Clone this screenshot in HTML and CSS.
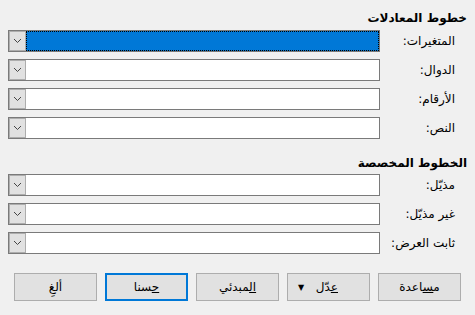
FILE: index.html
```html
<!DOCTYPE html>
<html lang="ar" dir="rtl">

<head>
    <meta charset="UTF-8" />
    <title>الخطوط</title>
    <link rel="stylesheet" href="styles.css">
</head>

<body>
    <div class="dialog">

        <!-- Formula fonts -->
        <div class="group-title">خطوط المعادلات</div>
        <div class="rows">
            <div class="row">
                <label class="label"><u>المتغيرات</u>:</label>
                <div class="combo">
                    <div class="field selected"></div>
                    <div class="drop"><svg width="9" height="6" viewBox="0 0 9 6"><path d="M1 1 L4.5 4.5 L8 1" fill="none" stroke="#444" stroke-width="1"/></svg></div>
                </div>
            </div>
            <div class="row">
                <label class="label"><u>الدوال</u>:</label>
                <div class="combo">
                    <div class="field"></div>
                    <div class="drop"><svg width="9" height="6" viewBox="0 0 9 6"><path d="M1 1 L4.5 4.5 L8 1" fill="none" stroke="#444" stroke-width="1"/></svg></div>
                </div>
            </div>
            <div class="row">
                <label class="label"><u>الأرقام</u>:</label>
                <div class="combo">
                    <div class="field"></div>
                    <div class="drop"><svg width="9" height="6" viewBox="0 0 9 6"><path d="M1 1 L4.5 4.5 L8 1" fill="none" stroke="#444" stroke-width="1"/></svg></div>
                </div>
            </div>
            <div class="row">
                <label class="label"><u>النص</u>:</label>
                <div class="combo">
                    <div class="field"></div>
                    <div class="drop"><svg width="9" height="6" viewBox="0 0 9 6"><path d="M1 1 L4.5 4.5 L8 1" fill="none" stroke="#444" stroke-width="1"/></svg></div>
                </div>
            </div>
        </div>

        <!-- Custom fonts -->
        <div class="group-title second">الخطوط المخصصة</div>
        <div class="rows">
            <div class="row">
                <label class="label"><u>مذيّل</u>:</label>
                <div class="combo">
                    <div class="field"></div>
                    <div class="drop"><svg width="9" height="6" viewBox="0 0 9 6"><path d="M1 1 L4.5 4.5 L8 1" fill="none" stroke="#444" stroke-width="1"/></svg></div>
                </div>
            </div>
            <div class="row">
                <label class="label"><u>غير</u> مذيّل:</label>
                <div class="combo">
                    <div class="field"></div>
                    <div class="drop"><svg width="9" height="6" viewBox="0 0 9 6"><path d="M1 1 L4.5 4.5 L8 1" fill="none" stroke="#444" stroke-width="1"/></svg></div>
                </div>
            </div>
            <div class="row">
                <label class="label"><u>ثابت</u> العرض:</label>
                <div class="combo">
                    <div class="field"></div>
                    <div class="drop"><svg width="9" height="6" viewBox="0 0 9 6"><path d="M1 1 L4.5 4.5 L8 1" fill="none" stroke="#444" stroke-width="1"/></svg></div>
                </div>
            </div>
        </div>

        <!-- Buttons -->
        <div class="buttons">
            <button class="btn">م<u>س</u>اعدة</button>
            <button class="btn menu-btn"><span><u>ع</u>دّل</span><span class="arrow">&#9660;</span></button>
            <button class="btn"><u>ال</u>مبدئي</button>
            <button class="btn default"><u>ح</u>سنا</button>
            <button class="btn">ألغِ</button>
        </div>
    </div>
</body>

</html>
```

FILE: styles.css
```css
body {
    margin: 0;
    background-color: #f0f0f0;
    font-family: 'DejaVu Sans', 'Noto Sans', sans-serif;
    font-size: 12px;
    color: #000;
}

.dialog {
    width: 475px;
    height: 315px;
    box-sizing: border-box;
    padding: 9px 8px 0 8px;
    display: flex;
    flex-direction: column;
}

.group-title {
    font-weight: bold;
    height: 21px;
    line-height: 18px;
}

.group-title.second {
    margin-top: 14px;
    line-height: 20px;
}

.rows {
    display: flex;
    flex-direction: column;
    gap: 7px;
}

.row {
    display: flex;
    align-items: center;
    height: 22px;
}

.label {
    width: 87px;
    padding-right: 12px;
    box-sizing: border-box;
    flex-shrink: 0;
}

.label u {
    text-decoration: none;
}

.combo {
    flex: 1;
    height: 22px;
    box-sizing: border-box;
    border: 1px solid #7a7a7a;
    display: flex;
    background-color: #fff;
}

.field {
    flex: 1;
}

.field.selected {
    background-color: #0078d7;
    outline: 1px dotted #000;
    outline-offset: -1px;
}

.drop {
    width: 17px;
    box-sizing: border-box;
    background-color: #e1e1e1;
    border: 1px solid #adadad;
    display: flex;
    align-items: center;
    justify-content: center;
}

.buttons {
    display: flex;
    gap: 8px;
    margin-top: 19px;
    padding: 0 6px;
}

.btn {
    width: 83px;
    height: 28px;
    box-sizing: border-box;
    background-color: #e1e1e1;
    border: 1px solid #adadad;
    font-family: 'DejaVu Sans', 'Noto Sans', sans-serif;
    font-size: 12px;
    color: #000;
    padding: 0;
}

.btn.default {
    border: 2px solid #0078d7;
}

.menu-btn {
    display: flex;
    align-items: center;
    justify-content: space-between;
    padding: 0 31px 0 10px;
}

.arrow {
    font-size: 8px;
}
```
